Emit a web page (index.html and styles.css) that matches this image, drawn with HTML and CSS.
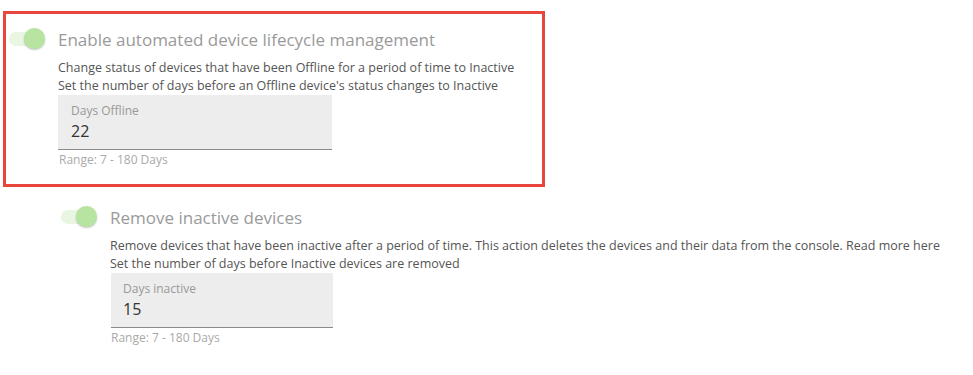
FILE: index.html
```html
<!DOCTYPE html>
<html lang="en">
<head>
    <meta charset="UTF-8">
    <meta name="viewport" content="width=device-width, initial-scale=1.0">
    <title>Device Lifecycle</title>
    <link rel="stylesheet" href="styles.css">
</head>
<body>
    <div class="setting highlighted">
        <div class="setting-head">
            <span class="toggle"><span class="knob"></span></span>
            <h2 class="title">Enable automated device lifecycle management</h2>
        </div>
        <div class="setting-body">
            <p class="desc">Change status of devices that have been Offline for a period of time to Inactive</p>
            <p class="desc">Set the number of days before an Offline device's status changes to Inactive</p>
            <div class="field field-wide">
                <label class="field-label">Days Offline</label>
                <div class="field-value">22</div>
            </div>
            <div class="hint">Range: 7 - 180 Days</div>
        </div>
    </div>

    <div class="setting nested">
        <div class="setting-head">
            <span class="toggle"><span class="knob"></span></span>
            <h2 class="title">Remove inactive devices</h2>
        </div>
        <div class="setting-body">
            <p class="desc">Remove devices that have been inactive after a period of time. This action deletes the devices and their data from the console. Read more here</p>
            <p class="desc">Set the number of days before Inactive devices are removed</p>
            <div class="field field-narrow">
                <label class="field-label">Days inactive</label>
                <div class="field-value">15</div>
            </div>
            <div class="hint">Range: 7 - 180 Days</div>
        </div>
    </div>
</body>
</html>
```

FILE: styles.css
```css
body {
    font-family: "Open Sans", Arial, sans-serif;
    margin: 0;
    padding: 11px 0 0 3px;
    background-color: #fff;
    color: #555;
}
.setting {
    width: 533px;
}
.highlighted {
    border: 3px solid #e8453c;
    padding: 14px 0 14px 3px;
}
.nested {
    margin: 19px 0 0 58px;
    width: 900px;
}
.setting-head {
    display: flex;
    align-items: center;
    height: 22px;
}
.toggle {
    position: relative;
    display: inline-block;
    width: 35px;
    height: 14px;
    border-radius: 7px;
    background-color: #e8f6e2;
    margin-right: 14px;
}
.knob {
    position: absolute;
    right: -1px;
    top: -4px;
    width: 21px;
    height: 21px;
    border-radius: 50%;
    background-color: #b7e5a1;
    box-shadow: 0 1px 2px rgba(0, 0, 0, 0.25);
}
.title {
    margin: 0;
    font-size: 17px;
    font-weight: normal;
    color: #9a9a9a;
    white-space: nowrap;
}
.setting-body {
    padding-left: 49px;
    padding-top: 9px;
}
.desc {
    margin: 0;
    font-size: 12.5px;
    line-height: 18px;
    color: #555;
    white-space: nowrap;
}
.field {
    height: 55px;
    padding: 7px 0 0 13px;
    box-sizing: border-box;
    background-color: #ededed;
    border-bottom: 1px solid #8a8a8a;
}
.field-wide {
    width: 274px;
}
.field-narrow {
    width: 222px;
    margin-left: 1px;
    padding-left: 12px;
}
.field-label {
    display: block;
    font-size: 12px;
    line-height: 18px;
    color: #999;
}
.field-value {
    font-size: 16px;
    line-height: 22px;
    color: #333;
}
.hint {
    margin-left: 1px;
    font-size: 12px;
    line-height: 20px;
    color: #aaa;
}
```
